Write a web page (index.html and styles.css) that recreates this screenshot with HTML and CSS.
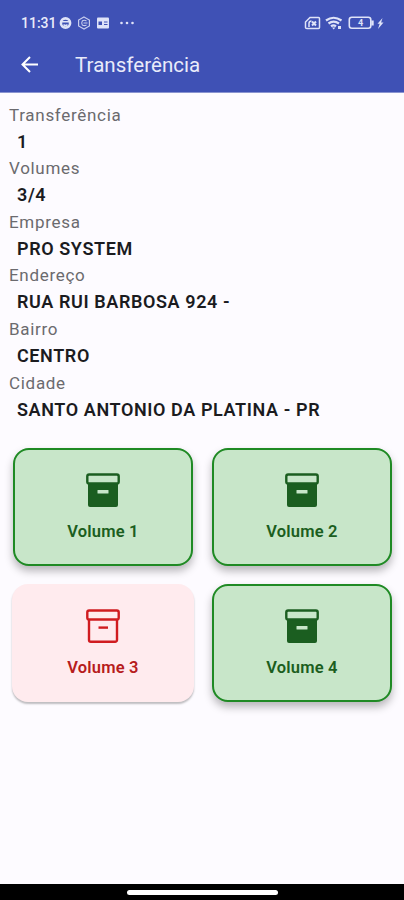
FILE: index.html
```html
<!DOCTYPE html>
<html lang="pt-BR">
  <head>
    <meta charset="UTF-8" />
    <meta name="viewport" content="width=device-width, initial-scale=1.0" />
    <title>Transferência</title>
    <link rel="stylesheet" href="styles.css">
  </head>
  <body>
    <!-- Símbolos reutilizados -->
    <svg class="symbols">
      <symbol id="box" viewBox="0 0 34 34">
        <rect x="1.3" y="1.5" width="31.4" height="9" rx="1.8" fill="none" stroke="currentColor" stroke-width="2.4" />
        <path d="M3 10.5V31a1.8 1.8 0 0 0 1.8 1.8H29.2A1.8 1.8 0 0 0 31 31V10.5" fill="none" stroke="currentColor" stroke-width="2.4" />
        <path d="M12.5 18.6h9.5" fill="none" stroke="currentColor" stroke-width="2.4" />
      </symbol>
      <symbol id="box-full" viewBox="0 0 34 34">
        <path d="M2 10H32V32a2 2 0 0 1-2 2H4a2 2 0 0 1-2-2Z" fill="currentColor" />
        <rect x="1.3" y="1.5" width="31.4" height="9" rx="1.8" fill="#c8e6c9" stroke="currentColor" stroke-width="2.4" />
        <rect x="11.5" y="17" width="11" height="3.6" rx="0.5" fill="#c8e6c9" />
      </symbol>
    </svg>

    <header class="top">
      <div class="status">
        <span class="time">11:31</span>
        <svg class="status-left" width="76" height="14" viewBox="0 0 76 14">
          <g fill="none" stroke="#dfe3f8">
            <circle cx="6.5" cy="7" r="4.6" stroke-width="2.6" />
            <path d="M3 5.8h7M4.5 8.7q2 1.6 4 0" stroke-width="1.5" />
            <path d="M25 1l5.4 3v6L25 13l-5.4-3V4Z" stroke-width="1.2" opacity="0.85" />
            <path d="M27.5 5q-2.5-1.5-4.2 0-1.2 2 0 4 2 1.3 4.2 0M24.5 7h4" stroke-width="1.1" opacity="0.85" />
          </g>
          <rect x="38" y="1.5" width="12" height="11" rx="1" fill="#dfe3f8" />
          <path d="M39.5 5.5h3.5v3.5h-3.5ZM45 5.5h3.5v1H45ZM45 8h3.5v1H45Z" fill="#3f51b5" />
          <g fill="#dfe3f8">
            <circle cx="62.5" cy="7" r="1.3" />
            <circle cx="68" cy="7" r="1.3" />
            <circle cx="73.5" cy="7" r="1.3" />
          </g>
        </svg>
        <svg class="status-right" width="80" height="16" viewBox="0 0 80 16">
          <g fill="none" stroke="#dfe3f8" stroke-width="1.5">
            <path d="M6 2.5h8.5q1 0 1 1v9q0 1-1 1H3q-1.5 0-1.5-1V7Z" />
            <path d="M5 12V8.5q0-2.5 2.5-2.5" stroke-width="1.5" />
            <path d="M8 6.5l4 4M12 6.5L8 10.5" stroke-width="2" />
            <path d="M22 5.5q7.5-5.5 15.5 0M24.5 8.5q5-3.8 10.5 0M27 11.3q2.5-2 5 0" stroke-width="2.2" />
            <rect x="45.3" y="2.3" width="21.5" height="11" rx="2.5" stroke-width="1.6" />
            <path d="M68.5 5.5v5" stroke-width="2.4" />
          </g>
          <path d="M28 12.5l1.7 2 1.7-2ZM34 11h3v3h-3Z" fill="#dfe3f8" />
          <text x="56.5" y="11" class="charge">4</text>
          <path d="M78.5 3l-5 5.8h2.2L74 14l5.5-6.5h-2.4Z" fill="#dfe3f8" />
        </svg>
      </div>
      <div class="toolbar">
        <svg class="back" width="18" height="18" viewBox="0 0 18 18">
          <path d="M17 8.5H2M9 1L1.5 8.5 9 16" fill="none" stroke="#fff" stroke-width="2" />
        </svg>
        <h1>Transferência</h1>
      </div>
    </header>

    <main>
      <dl class="info">
        <dt>Transferência</dt>
        <dd>1</dd>
        <dt>Volumes</dt>
        <dd>3/4</dd>
        <dt>Empresa</dt>
        <dd>PRO SYSTEM</dd>
        <dt>Endereço</dt>
        <dd>RUA RUI BARBOSA 924 -</dd>
        <dt>Bairro</dt>
        <dd>CENTRO</dd>
        <dt>Cidade</dt>
        <dd>SANTO ANTONIO DA PLATINA - PR</dd>
      </dl>

      <div class="volumes">
        <div class="card done">
          <svg class="icon"><use href="#box-full" /></svg>
          <span>Volume 1</span>
        </div>
        <div class="card done">
          <svg class="icon"><use href="#box-full" /></svg>
          <span>Volume 2</span>
        </div>
        <div class="card pending">
          <svg class="icon"><use href="#box" /></svg>
          <span>Volume 3</span>
        </div>
        <div class="card done">
          <svg class="icon"><use href="#box-full" /></svg>
          <span>Volume 4</span>
        </div>
      </div>
    </main>

    <footer class="navbar"><div class="handle"></div></footer>
  </body>
</html>
```
FILE: styles.css
```css
* {
  box-sizing: border-box;
}
body {
  font-family: Roboto, "Liberation Sans", sans-serif;
  background-color: #fdfbff;
  margin: 0;
  height: 900px;
  display: flex;
  flex-direction: column;
  overflow: hidden;
}
.symbols {
  display: none;
}
.top {
  height: 93px;
  background-color: #3f51b5;
  border-bottom: 1px solid #8a94d0;
  color: #e9ebfa;
}
.status {
  display: flex;
  align-items: center;
  height: 46px;
  padding: 0 20px 0 21px;
}
.time {
  width: 38px;
  font-size: 14px;
  font-weight: 500;
  line-height: 16px;
}
.status-right {
  margin-left: auto;
}
.charge {
  font-size: 9px;
  font-weight: 700;
  fill: #dfe3f8;
  text-anchor: middle;
}
.toolbar {
  display: flex;
  align-items: center;
  height: 38px;
  padding-left: 21px;
}
h1 {
  margin: 0 0 0 36px;
  font-size: 20.5px;
  font-weight: 400;
  letter-spacing: 0.05px;
}
main {
  flex: 1;
}
.info {
  margin: 0;
  padding: 8.6px 9px 0;
}
dt {
  height: 27px;
  line-height: 27px;
  font-size: 17px;
  letter-spacing: 0.7px;
  color: #6b6a6e;
}
dd {
  margin: 0;
  padding-left: 8px;
  height: 26.6px;
  line-height: 26.6px;
  font-size: 18px;
  font-weight: 600;
  letter-spacing: 0.6px;
  color: #1b1b1f;
  white-space: nowrap;
}
.volumes {
  display: grid;
  grid-template-columns: 1fr 1fr;
  gap: 18.5px 19px;
  padding: 24.4px 12px 0 13px;
}
.card {
  display: flex;
  flex-direction: column;
  align-items: center;
  height: 118px;
  padding-top: 23px;
  border: 2px solid transparent;
  border-radius: 16px;
  font-size: 16.5px;
  font-weight: 600;
  letter-spacing: 0.2px;
  line-height: 20px;
}
.done {
  background-color: #c8e6c9;
  border-color: #1f8a24;
  color: #1b5e20;
  box-shadow: 0 5px 8px rgba(0, 0, 0, 0.28);
}
.pending {
  background: #ffebee;
  border: none;
  margin: 0 -1px;
  padding-top: 25px;
  color: #b71c1c;
  box-shadow: 0 2px 2px rgba(0, 0, 0, 0.25);
}
.pending .icon {
  color: #d01c20;
}
.icon {
  width: 34px;
  height: 34px;
  margin-bottom: 15px;
}
.navbar {
  display: flex;
  justify-content: center;
  align-items: center;
  height: 16px;
  background-color: #000;
}
.handle {
  width: 151px;
  height: 5px;
  border-radius: 3px;
  background-color: #fff;
}
```
